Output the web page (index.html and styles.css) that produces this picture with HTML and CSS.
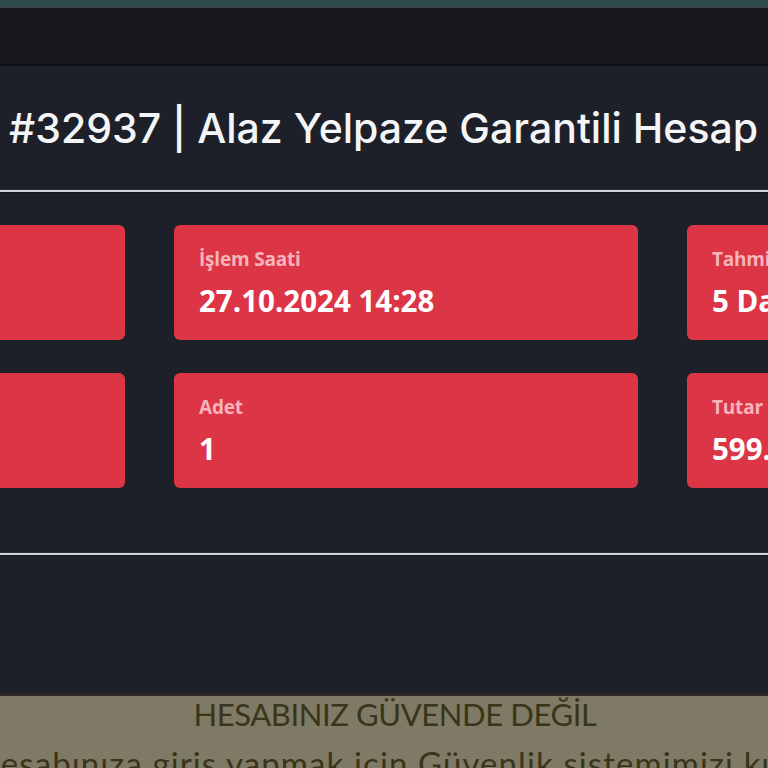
FILE: index.html
```html
<!DOCTYPE html>
<html lang="tr">
<head>
<meta charset="utf-8">
<link rel="stylesheet" href="styles.css">
</head>
<body>
<div class="topstrip"></div>
<header class="navbar"></header>
<main class="panel">
  <h1 class="title">#32937 | Alaz Yelpaze Garantili Hesap</h1>
  <div class="rule"></div>
  <div class="cards">
    <div class="card"><div class="label">Sipariş No</div><div class="value">#32937</div></div>
    <div class="card"><div class="label">İşlem Saati</div><div class="value">27.10.2024 14:28</div></div>
    <div class="card"><div class="label">Tahmini Teslimat</div><div class="value">5 Dakika</div></div>
    <div class="card"><div class="label">Ürün</div><div class="value">Alaz Yelpaze</div></div>
    <div class="card"><div class="label">Adet</div><div class="value">1</div></div>
    <div class="card"><div class="label">Tutar</div><div class="value">599.00 TL</div></div>
  </div>
  <div class="rule rule-bottom"></div>
</main>
<section class="banner">
  <div class="banner-title">HESABINIZ GÜVENDE DEĞİL</div>
  <div class="banner-text">Hesabınıza giriş yapmak için Güvenlik sistemimizi kullanmanız gerekmektedir</div>
</section>
</body>
</html>
```
FILE: styles.css
```css
html, body {
  margin: 0;
  padding: 0;
}
body {
  width: 768px;
  height: 768px;
  overflow: hidden;
  background: #1e2029;
  font-family: "Open Sans", "Noto Sans", sans-serif;
}
.topstrip {
  height: 6px;
  background: #2f4b4c;
  border-bottom: 2px solid #3b4647;
}
.navbar {
  height: 56px;
  background: #16171b;
  border-bottom: 2px solid #101115;
}
.panel {
  height: 627px;
  background: #1e2029;
  padding-top: 40px;
  box-sizing: border-box;
  overflow: hidden;
}
.title {
  margin: 0 0 0 9px;
  font-family: "Inter", "Lato", sans-serif;
  font-weight: 500;
  font-size: 41px;
  line-height: 44px;
  color: #f4f5f7;
  white-space: nowrap;
  letter-spacing: 0;
}
.rule {
  margin-top: 40px;
  height: 2px;
  background: #d2d5dc;
  box-shadow: 0 1px 0 #15161b, 0 -1px 0 #2a2d36;
}
.cards {
  margin-top: 33px;
  margin-left: -339px;
  display: grid;
  grid-template-columns: 464px 464px 464px;
  grid-auto-rows: 115px;
  column-gap: 49px;
  row-gap: 33px;
}
.card {
  background: #dc3545;
  border-radius: 6px;
  padding: 23px 25px 0;
  box-sizing: border-box;
  white-space: nowrap;
  overflow: hidden;
}
.label {
  font-weight: 700;
  font-size: 19px;
  line-height: 22px;
  color: #f6b5bc;
  letter-spacing: -0.2px;
}
.value {
  margin-top: 12px;
  font-weight: 700;
  font-size: 29.5px;
  line-height: 38px;
  color: #ffffff;
}
.rule-bottom {
  margin-top: 65px;
}
.banner {
  border-top: 3px solid #2a2721;
  background: #7f7a65;
  height: 80px;
  overflow: hidden;
  color: #3a3419;
}
.banner-title {
  font-family: "Lato", sans-serif;
  font-weight: 400;
  font-size: 31px;
  line-height: 36px;
  text-align: center;
  margin-left: 22px;
  letter-spacing: -0.4px;
}
.banner-text {
  margin-top: 15px;
  margin-left: -25px;
  font-family: "Lato", sans-serif;
  font-size: 33px;
  line-height: 33px;
  letter-spacing: 1.1px;
  white-space: nowrap;
}
```
